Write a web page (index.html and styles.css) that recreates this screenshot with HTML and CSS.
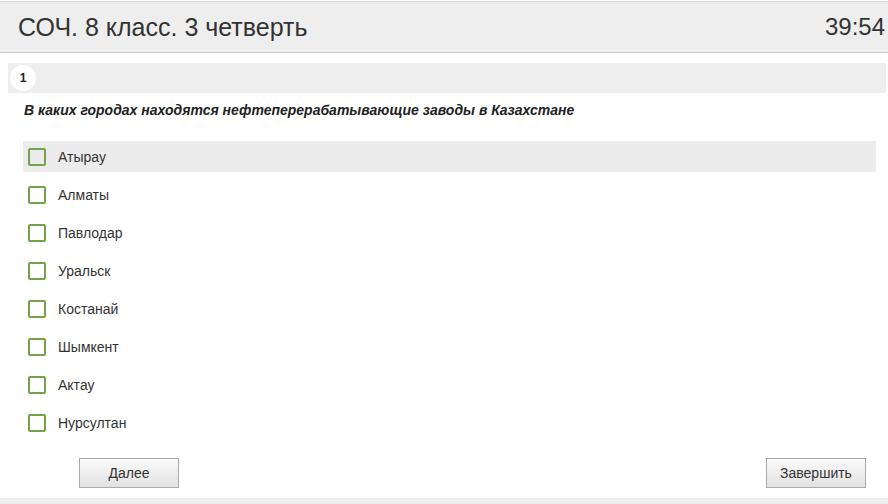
FILE: index.html
```html
<!DOCTYPE html>
<html lang="ru">

<head>
    <meta charset="UTF-8" />
    <meta name="viewport" content="width=device-width, initial-scale=1.0" />
    <title>СОЧ. 8 класс. 3 четверть</title>
    <link rel="stylesheet" href="styles.css">
</head>

<body>
    <!-- Test header -->
    <div class="header">
        <h1 class="title">СОЧ. 8 класс. 3 четверть</h1>
        <div class="timer">39:54</div>
    </div>

    <div class="main">
        <div class="qbar">
            <span class="qnum">1</span>
        </div>

        <p class="qtext">В каких городах находятся нефтеперерабатывающие заводы в Казахстане</p>

        <!-- Answers -->
        <ul class="options">
            <li class="option hover"><span class="check"></span>Атырау</li>
            <li class="option"><span class="check"></span>Алматы</li>
            <li class="option"><span class="check"></span>Павлодар</li>
            <li class="option"><span class="check"></span>Уральск</li>
            <li class="option"><span class="check"></span>Костанай</li>
            <li class="option"><span class="check"></span>Шымкент</li>
            <li class="option"><span class="check"></span>Актау</li>
            <li class="option"><span class="check"></span>Нурсултан</li>
        </ul>

        <div class="actions">
            <button class="btn">Далее</button>
            <button class="btn">Завершить</button>
        </div>
    </div>

    <div class="footer"></div>
</body>

</html>
```

FILE: styles.css
```css
body {
    font-family: "Liberation Sans", Arial, sans-serif;
    background-color: #fff;
    color: #333;
    margin: 0;
    padding: 0;
}

.header {
    margin-top: 1px;
    height: 50px;
    border-top: 1px solid #d4d4d4;
    border-bottom: 1px solid #c8c8c8;
    background-color: #eee;
    display: flex;
    justify-content: space-between;
    align-items: center;
    padding: 0 3px 0 18px;
}

.title {
    margin: 0;
    font-size: 25px;
    font-weight: normal;
    color: #333;
}

.timer {
    font-size: 24px;
    color: #333;
}

.main {
    padding: 0 2px 0 8px;
}

.qbar {
    margin-top: 10px;
    height: 30px;
    background-color: #eee;
    display: flex;
    align-items: center;
    padding-left: 2px;
}

.qnum {
    width: 26px;
    height: 26px;
    border-radius: 50%;
    background-color: #fff;
    font-size: 12px;
    font-weight: bold;
    color: #222;
    display: flex;
    align-items: center;
    justify-content: center;
}

.qtext {
    margin: 0;
    padding: 8px 0 0 16px;
    line-height: 19px;
    font-size: 14px;
    font-weight: bold;
    font-style: italic;
    color: #222;
}

.options {
    list-style: none;
    margin: 21px 10px 0 15px;
    padding: 0;
}

.option {
    height: 31px;
    margin-bottom: 7px;
    display: flex;
    align-items: center;
    padding-left: 5px;
    font-size: 14px;
    color: #333;
}

.option:last-child {
    margin-bottom: 0;
}

.option.hover {
    background-color: #ececec;
}

.check {
    width: 14px;
    height: 14px;
    border: 2px solid #72a34c;
    border-radius: 2px;
    background-color: #fff;
    margin-right: 12px;
}

.option.hover .check {
    background-color: #ececec;
}

.actions {
    margin: 20px 20px 0 71px;
    display: flex;
    justify-content: space-between;
}

.btn {
    width: 100px;
    height: 30px;
    font-family: "Liberation Sans", Arial, sans-serif;
    font-size: 14px;
    color: #333;
    border: 1px solid #ababab;
    border-radius: 0;
    background: linear-gradient(#fafafa, #e2e2e2);
    cursor: pointer;
}

.footer {
    margin-top: 10px;
    height: 6px;
    background-color: #eee;
}
```
